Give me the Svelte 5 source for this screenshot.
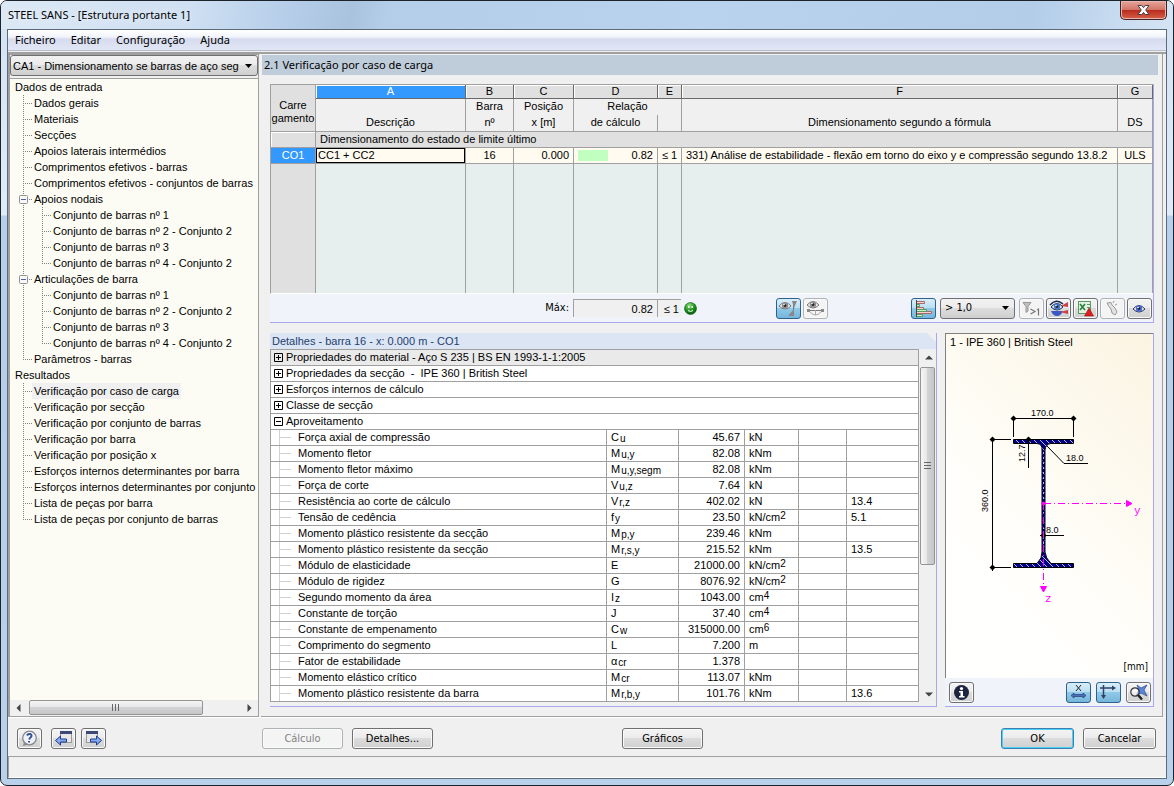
<script lang="ts">
	type TreeNode = { label: string; children?: string[] };
	type DetailRow = {
		name: string;
		symbol: string;
		sub?: string;
		value: string;
		unit?: string;
		power?: string;
		clause?: string;
	};

	const menu = ['Ficheiro', 'Editar', 'Configuração', 'Ajuda'];

	const memberSets = [
		'Conjunto de barras nº 1',
		'Conjunto de barras nº 2 - Conjunto 2',
		'Conjunto de barras nº 3',
		'Conjunto de barras nº 4 - Conjunto 2'
	];

	const sections: { title: string; nodes: TreeNode[] }[] = [
		{
			title: 'Dados de entrada',
			nodes: [
				{ label: 'Dados gerais' },
				{ label: 'Materiais' },
				{ label: 'Secções' },
				{ label: 'Apoios laterais intermédios' },
				{ label: 'Comprimentos efetivos - barras' },
				{ label: 'Comprimentos efetivos - conjuntos de barras' },
				{ label: 'Apoios nodais', children: memberSets },
				{ label: 'Articulações de barra', children: memberSets },
				{ label: 'Parâmetros - barras' }
			]
		},
		{
			title: 'Resultados',
			nodes: [
				{ label: 'Verificação por caso de carga' },
				{ label: 'Verificação por secção' },
				{ label: 'Verificação por conjunto de barras' },
				{ label: 'Verificação por barra' },
				{ label: 'Verificação por posição x' },
				{ label: 'Esforços internos determinantes por barra' },
				{ label: 'Esforços internos determinantes por conjunto' },
				{ label: 'Lista de peças por barra' },
				{ label: 'Lista de peças por conjunto de barras' }
			]
		}
	];

	const groups = [
		'Propriedades do material - Aço S 235 | BS EN 1993-1-1:2005',
		'Propriedades da secção  -  IPE 360 | British Steel',
		'Esforços internos de cálculo',
		'Classe de secção'
	];

	const details: DetailRow[] = [
		{ name: 'Força axial de compressão', symbol: 'C', sub: 'u', value: '45.67', unit: 'kN' },
		{ name: 'Momento fletor', symbol: 'M', sub: 'u,y', value: '82.08', unit: 'kNm' },
		{ name: 'Momento fletor máximo', symbol: 'M', sub: 'u,y,segm', value: '82.08', unit: 'kNm' },
		{ name: 'Força de corte', symbol: 'V', sub: 'u,z', value: '7.64', unit: 'kN' },
		{ name: 'Resistência ao corte de cálculo', symbol: 'V', sub: 'r,z', value: '402.02', unit: 'kN', clause: '13.4' },
		{ name: 'Tensão de cedência', symbol: 'f', sub: 'y', value: '23.50', unit: 'kN/cm', power: '2', clause: '5.1' },
		{ name: 'Momento plástico resistente da secção', symbol: 'M', sub: 'p,y', value: '239.46', unit: 'kNm' },
		{ name: 'Momento plástico resistente da secção', symbol: 'M', sub: 'r,s,y', value: '215.52', unit: 'kNm', clause: '13.5' },
		{ name: 'Módulo de elasticidade', symbol: 'E', value: '21000.00', unit: 'kN/cm', power: '2' },
		{ name: 'Módulo de rigidez', symbol: 'G', value: '8076.92', unit: 'kN/cm', power: '2' },
		{ name: 'Segundo momento da área', symbol: 'I', sub: 'z', value: '1043.00', unit: 'cm', power: '4' },
		{ name: 'Constante de torção', symbol: 'J', value: '37.40', unit: 'cm', power: '4' },
		{ name: 'Constante de empenamento', symbol: 'C', sub: 'w', value: '315000.00', unit: 'cm', power: '6' },
		{ name: 'Comprimento do segmento', symbol: 'L', value: '7.200', unit: 'm' },
		{ name: 'Fator de estabilidade', symbol: 'α', sub: 'cr', value: '1.378' },
		{ name: 'Momento elástico crítico', symbol: 'M', sub: 'cr', value: '113.07', unit: 'kNm' },
		{ name: 'Momento plástico resistente da barra', symbol: 'M', sub: 'r,b,y', value: '101.76', unit: 'kNm', clause: '13.6' }
	];

	const ratio = 0.82;

	let selected = $state('Verificação por caso de carga');
	let closed: Record<string, boolean> = $state({});
</script>

{#snippet eye(x: number, y: number, iris: string, rim: string)}
	<g transform="translate({x} {y})">
		<path d="M0 5Q6 -2 12 5Q6 11 0 5Z" fill="#f4f4f4" stroke={rim} stroke-width="1" />
		<circle cx="6" cy="4.6" r="3.2" fill={iris} />
		<circle cx="6" cy="4.6" r="1.3" fill="#222" />
		<circle cx="5" cy="3.5" r=".8" fill="#fff" />
	</g>
{/snippet}

<div class="window">
	<header class="titlebar">
		<h1>STEEL SANS - [Estrutura portante 1]</h1>
		<button class="close" aria-label="Fechar">
			<svg width="13" height="10" viewBox="0 0 13 10">
				<path
					d="M1 .5H4.8L6.5 2.6L8.2 .5H12L8.7 5L12 9.5H8.2L6.5 7.4L4.8 9.5H1L4.3 5Z"
					fill="#fff"
					stroke="#4c3b46"
				/>
			</svg>
		</button>
	</header>

	<div class="client">
		<nav class="menu">
			{#each menu as item}
				<button>{item}</button>
			{/each}
		</nav>

		<div class="main">
			<aside class="sidebar">
				<div class="case-row">
					<select class="case" aria-label="Caso">
						<option>CA1 - Dimensionamento se barras de aço segundo</option>
					</select>
				</div>
				<div class="tree">
					{#each sections as section}
						<div class="root">{section.title}</div>
						<ul>
							{#each section.nodes as node}
								<li>
									<div class="node">
										{#if node.children}
											<button
												class="toggle"
												aria-label={node.label}
												onclick={() => (closed[node.label] = !closed[node.label])}
											>
												<svg width="9" height="9" viewBox="0 0 9 9">
													<rect x=".5" y=".5" width="8" height="8" rx="1" fill="#f8f8f8" stroke="#919191" />
													<path d={closed[node.label] ? 'M2 4.5H7M4.5 2V7' : 'M2 4.5H7'} stroke="#4b63a7" />
												</svg>
											</button>
										{/if}
										<a
											href="#node"
											class:selected={selected === node.label}
											onclick={() => (selected = node.label)}>{node.label}</a
										>
									</div>
									{#if node.children && !closed[node.label]}
										<ul>
											{#each node.children as child}
												<li><div class="node"><a href="#node">{child}</a></div></li>
											{/each}
										</ul>
									{/if}
								</li>
							{/each}
						</ul>
					{/each}
				</div>
				<div class="hscroll">
					<button aria-label="Esquerda"><svg width="5" height="8" viewBox="0 0 5 8"><path d="M4.5 0V8L.5 4Z" fill="#444" /></svg></button>
					<div class="track">
						<div class="thumb">
							<svg width="9" height="7" viewBox="0 0 9 7"><path d="M1.5 0V7M4.5 0V7M7.5 0V7" stroke="#666" /></svg>
						</div>
					</div>
					<button aria-label="Direita"><svg width="5" height="8" viewBox="0 0 5 8"><path d="M.5 0V8L4.5 4Z" fill="#444" /></svg></button>
				</div>
			</aside>

			<main class="content">
				<h2>2.1 Verificação por caso de carga</h2>

				<section class="results">
					<table class="grid">
						<colgroup>
							<col class="w45" /><col class="w150" /><col class="w48" /><col class="w60" />
							<col class="w84" /><col class="w24" /><col /><col class="w35" />
						</colgroup>
						<thead>
							<tr class="letters">
								<th rowspan="3" class="corner">Carre<br />gamento</th>
								<th class="active">A</th>
								<th>B</th>
								<th>C</th>
								<th>D</th>
								<th>E</th>
								<th>F</th>
								<th>G</th>
							</tr>
							<tr class="upper">
								<th></th>
								<th>Barra</th>
								<th>Posição</th>
								<th colspan="2">Relação</th>
								<th></th>
								<th></th>
							</tr>
							<tr class="lower">
								<th>Descrição</th>
								<th>nº</th>
								<th>x [m]</th>
								<th>de cálculo</th>
								<th></th>
								<th>Dimensionamento segundo a fórmula</th>
								<th>DS</th>
							</tr>
						</thead>
						<tbody>
							<tr class="group">
								<th></th>
								<td colspan="7">Dimensionamento do estado de limite último</td>
							</tr>
							<tr class="case-line">
								<th>CO1</th>
								<td class="focus">CC1 + CC2</td>
								<td class="center">16</td>
								<td class="right">0.000</td>
								<td>
									<div class="ratio">
										<span class="bar" style="width: {Math.round(ratio * 37)}px"></span>
										<span>{ratio}</span>
									</div>
								</td>
								<td class="center">≤ 1</td>
								<td>331) Análise de estabilidade - flexão em torno do eixo y e compressão segundo 13.8.2</td>
								<td class="center">ULS</td>
							</tr>
							<tr class="filler">
								<th></th><td></td><td></td><td></td><td></td><td></td><td></td><td></td>
							</tr>
						</tbody>
					</table>

					<div class="summary">
						<span class="max-label">Máx:</span>
						<output class="max-value">0.82</output>
						<output class="max-limit">≤ 1</output>
						<svg class="smiley" width="13" height="13" viewBox="0 0 13 13">
							<defs>
								<radialGradient id="green" cx=".4" cy=".25" r=".8">
									<stop offset="0" stop-color="#8fe080" />
									<stop offset=".5" stop-color="#229a22" />
									<stop offset="1" stop-color="#064f08" />
								</radialGradient>
							</defs>
							<circle cx="6.5" cy="6.500" r="6" fill="url(#green)" stroke="#0a5a0c" stroke-width=".6" />
							<path d="M4 4H5.500V6H4ZM7.500 4H9V6H7.500Z" fill="#fff" />
							<path d="M4 8.500Q6.500 10.500 9 8.500" fill="none" stroke="#fff" />
						</svg>

						<div class="tools view-tools">
							<button class="tool pressed" aria-label="Mostrar coluna">
								<svg width="21" height="17" viewBox="0 0 21 17">
									{@render eye(1, 1, '#8e8e8e', '#777')}
									<path d="M15.5 1V16" stroke="#777" />
									<path d="M14 1H19L16 8Z M16 9L10 16H16Z" fill="#888" />
								</svg>
							</button>
							<button class="tool flat" aria-label="Mostrar barra">
								<svg width="21" height="17" viewBox="0 0 21 17">
									{@render eye(2, 0, '#8e8e8e', '#777')}
									<path d="M3 10.5H18" stroke="#777" />
									<path d="M2 9H5V12H2ZM16 9H19V12H16Z" fill="#888" />
									<path d="M5 12Q10.500 18 16 12M10.5 10V15" fill="none" stroke="#aaa" />
								</svg>
							</button>
						</div>

						<div class="tools filter-tools">
							<button class="tool pressed" aria-label="Diagrama">
								<svg width="21" height="17" viewBox="0 0 21 17">
									<g stroke-width="1">
										<path d="M3.500 1.500H11.500V3.500H3.500ZM3.500 7.500H10.500V9.500H3.500ZM3.500 11.500H18.500V13.500H3.500Z" fill="#ffd0d0" stroke="#a86a6a" />
										<path d="M3.500 4.500H6.500V6.500H3.500ZM3.500 9.500H13.500V11.500H3.500ZM3.500 14.500H9.500V16.500H3.500Z" fill="#c4f5c8" stroke="#5a9a62" />
									</g>
									<path d="M3.500 0V17" stroke="#444" />
								</svg>
							</button>
							<select class="limit" aria-label="Limite">
								<option>&gt; 1,0</option>
							</select>
							<button class="tool flat" aria-label="Filtrar">
								<svg width="21" height="17" viewBox="0 0 21 17">
									<path d="M2 2.500H10L7 6.500V11L5 12.500V6.500Z" fill="#c0c0c0" stroke="#999" />
									<path d="M9.500 9L14 11.500L9.500 14M16 10L17.500 9V15.500" fill="none" stroke="#777" stroke-width="1.2" />
								</svg>
							</button>
							<button class="tool" aria-label="Cores">
								<svg width="21" height="17" viewBox="0 0 21 17">
									<path d="M3 11H15Q13 16 9 16Q5 16 3 11Z" fill="#3c58c4" />
									<path d="M20 2L13 6L20 7ZM20 10L12 12L20 14Z" fill="#d04040" />
									{@render eye(3, 2, '#3f78d0', '#14254f')}
									<path d="M2 5Q8 -2 15 4" fill="none" stroke="#14254f" stroke-width="1.5" />
								</svg>
							</button>
							<button class="tool" aria-label="Exportar para Excel">
								<svg width="21" height="17" viewBox="0 0 21 17">
									<rect x="3.500" y="1.500" width="12" height="12" fill="#e3f1e3" stroke="#5a9a62" />
									<path d="M5 4L10 10M10 4L5 10" stroke="#27803a" stroke-width="1.600" />
									<path d="M12 4.500H15M12 7.500H15" stroke="#5a9a62" />
									<path d="M14 8L18.500 16H9.500Z" fill="#dc2020" stroke="#991010" stroke-width=".6" />
								</svg>
							</button>
							<button class="tool flat" aria-label="Selecionar">
								<svg width="21" height="17" viewBox="0 0 21 17">
									<path d="M5 3L9 2.500L10 5L13 8L15 12L13 15L10 13L9 9L7 6.500Z" fill="#e2e2e2" stroke="#999" />
									<path d="M11 3L12 1M13 5L15 4" stroke="#999" />
								</svg>
							</button>
							<button class="tool" aria-label="Modo de visualização">
								<svg width="21" height="17" viewBox="0 0 21 17">
									{@render eye(4, 4, '#4a6bd0', '#26345f')}
								</svg>
							</button>
						</div>
					</div>
				</section>

				<div class="split">
					<section class="details">
						<h3>Detalhes - barra 16 - x: 0.000 m - CO1</h3>
						<div class="details-body">
							<table>
								<colgroup>
									<col /><col class="w72" /><col class="w66" /><col class="w54" />
									<col class="w48" /><col class="w72" />
								</colgroup>
								<tbody>
									{#each groups as group}
										<tr class="heading">
											<td colspan="6">
												<button class="box" aria-label="Expandir">
													<svg width="9" height="9" viewBox="0 0 9 9"><path d="M.5 .5H8.5V8.500H.5ZM2 4.5H7M4.5 2V7" fill="none" stroke="#000" /></svg>
												</button>{group}
											</td>
										</tr>
									{/each}
									<tr class="heading">
										<td colspan="6">
											<button class="box" aria-label="Recolher">
												<svg width="9" height="9" viewBox="0 0 9 9"><path d="M.5 .5H8.5V8.500H.5ZM2 4.5H7" fill="none" stroke="#000" /></svg>
											</button>Aproveitamento
										</td>
									</tr>
									{#each details as row}
										<tr>
											<td class="name">{row.name}</td>
											<td>{row.symbol}{#if row.sub}<sub>{row.sub}</sub>{/if}</td>
											<td class="right">{row.value}</td>
											<td>{row.unit ?? ''}{#if row.power}<sup>{row.power}</sup>{/if}</td>
											<td></td>
											<td>{row.clause ?? ''}</td>
										</tr>
									{/each}
								</tbody>
							</table>
							<div class="vscroll">
								<button aria-label="Acima"><svg width="8" height="5" viewBox="0 0 8 5"><path d="M0 4.500H8L4 .5Z" fill="#444" /></svg></button>
								<div class="vtrack">
									<div class="vthumb">
										<svg width="7" height="9" viewBox="0 0 7 9"><path d="M0 1.5H7M0 4.5H7M0 7.500H7" stroke="#666" /></svg>
									</div>
								</div>
								<button aria-label="Abaixo"><svg width="8" height="5" viewBox="0 0 8 5"><path d="M0 .5H8L4 4.500Z" fill="#444" /></svg></button>
							</div>
						</div>
					</section>

					<section class="profile">
						<div class="drawing">
							<h3>1 - IPE 360 | British Steel</h3>
							<svg viewBox="0 0 207 306">
								<defs>
									<pattern id="hatch" width="6" height="6" patternUnits="userSpaceOnUse">
										<rect width="6" height="6" fill="#000080" />
										<path d="M0 0L6 6" stroke="#b8b8ff" />
									</pattern>
								</defs>
								<!-- cross-section -->
								<path
									d="M67.500 87.500H127.500V91.500H105Q99.500 92 99 98V200Q99.500 206 105 211.500H127.500V215.500H67.500V211.500H91Q96.500 206 96 200V98Q96.500 92 91 91.500H67.500Z"
									fill="url(#hatch)"
									stroke="#000"
								/>
								<path d="M97.500 98V202" stroke="#000060" stroke-width="2" />
								<path d="M97.500 100V200" stroke="#b8b8ff" stroke-dasharray="2 3" />
								<!-- dimension lines -->
								<g fill="none" stroke="#000">
									<path d="M65 66.500H130M67.500 64V85M127.500 64V85" />
									<path d="M46.500 85V219M44 87.500H65M44 215.500H65" />
									<path d="M82.500 85V116" />
									<path d="M101 94L118 111.500H142" />
									<path d="M94 183.500H118" />
								</g>
								<g>
									<path d="M67.500 63.500L70.500 66.500L67.500 69.500L64.500 66.500Z" />
									<path d="M127.500 63.500L130.500 66.500L127.500 69.500L124.500 66.500Z" />
									<path d="M46.500 84.500L49.500 87.500L46.500 90.500L43.500 87.500Z" />
									<path d="M46.500 212.500L49.500 215.500L46.500 218.500L43.500 215.500Z" />
									<path d="M82.500 84.500L85.500 87.500L82.500 90.500L79.500 87.500Z" />
									<path d="M97.500 180.500L100.500 183.500L97.500 186.500L94.500 183.500Z" />
								</g>
								<!-- local axes -->
								<g stroke="#f0f" fill="#f0f">
									<path d="M98 151.500H180" fill="none" stroke-dasharray="7 3 1 3" />
									<path d="M97.500 151V234" fill="none" stroke-dasharray="7 3 1 3" />
									<path d="M180.500 148.500V154.500L186 151.500Z" />
									<path d="M94.500 234.500H100.500L97.500 240Z" />
									<circle cx="97.500" cy="151.500" r="1.500" />
								</g>
								<g class="dims">
									<text x="85" y="64">170.0</text>
									<text x="120" y="109">18.0</text>
									<text x="100" y="181">8.0</text>
									<text transform="translate(42 160) rotate(-90)">360.0</text>
									<text transform="translate(79 110) rotate(-90)">12.7</text>
								</g>
								<g class="axes">
									<text x="188" y="162">y</text>
									<text x="99" y="250">z</text>
								</g>
							</svg>
							<div class="unit">[mm]</div>
						</div>
						<div class="profile-tools">
							<button class="tool" aria-label="Informação">
								<svg width="21" height="17" viewBox="0 0 21 17">
									<circle cx="10.500" cy="8.500" r="7.500" fill="#1c2440" />
									<circle cx="10.500" cy="4.600" r="1.600" fill="#fff" />
									<path d="M8 7H12V12H13.500V13.500H8V12H9.500V8.500H8Z" fill="#fff" />
								</svg>
							</button>
							<div class="tools">
								<button class="tool pressed" aria-label="Dimensões">
									<svg width="21" height="17" viewBox="0 0 21 17">
										<path d="M8 1L13 7M13 1L8 7" stroke="#222" />
										<path d="M3 11.500L6 9V10.500H15V9L18 11.500L15 14V12.500H6V14Z" fill="#4a70b8" stroke="#263e78" stroke-width=".7" />
									</svg>
								</button>
								<button class="tool pressed" aria-label="Eixos principais">
									<svg width="21" height="17" viewBox="0 0 21 17">
										<path d="M2 4H16M5.500 1V13" stroke="#33406a" stroke-width="1.500" />
										<path d="M14 1.500L18 4L14 6.500ZM3 11H8L5.500 15Z" fill="#33406a" />
									</svg>
								</button>
								<button class="tool" aria-label="Mostrar tudo">
									<svg width="21" height="17" viewBox="0 0 21 17">
										<path d="M9 1L13 4L19 1L16 6L19 12L13 9L8 12L11 6Z" fill="#5a86dc" stroke="#27468e" stroke-width=".7" />
										<circle cx="7" cy="8" r="4.200" fill="#fff" fill-opacity=".5" stroke="#333" stroke-width="1.200" />
										<path d="M10 11L14 15.500" stroke="#222" stroke-width="2.500" />
									</svg>
								</button>
							</div>
						</div>
					</section>
				</div>
			</main>
		</div>

		<footer class="actions">
			<div class="nav-tools">
				<button class="tool" aria-label="Ajuda">
					<svg width="21" height="17" viewBox="0 0 21 17">
						<circle cx="10.500" cy="8" r="6.800" fill="#eef2f8" stroke="#888" stroke-width="1.300" />
						<path d="M5 12L4 16L9 14.500Z" fill="#888" />
						<path d="M8 5.500Q9 3.500 11 4Q13.500 5 12 7Q10.500 8 10.300 9.500M10 11V12.500" fill="none" stroke="#34519c" stroke-width="2" />
					</svg>
				</button>
				<button class="tool step" aria-label="Tabela anterior">
					<svg width="21" height="17" viewBox="0 0 21 17">
						<rect x="7.500" y="1.500" width="11" height="11" fill="#e8e8e8" stroke="#999" />
						<path d="M7 1H19V4H7Z" fill="#3c4876" />
						<path d="M2.500 10.500L7.500 6V9H13.500V12H7.500V15Z" fill="#86a8ec" stroke="#1d3c92" />
					</svg>
				</button>
				<button class="tool" aria-label="Tabela seguinte">
					<svg width="21" height="17" viewBox="0 0 21 17">
						<rect x="3.500" y="1.500" width="11" height="11" fill="#e8e8e8" stroke="#999" />
						<path d="M3 1H15V4H3Z" fill="#3c4876" />
						<path d="M18.500 10.500L13.500 6V9H7.500V12H13.500V15Z" fill="#86a8ec" stroke="#1d3c92" />
					</svg>
				</button>
			</div>
			<div class="buttons">
				<button class="push wide" disabled>Cálculo</button>
				<button class="push wide">Detalhes...</button>
			</div>
			<button class="push wide graphics">Gráficos</button>
			<div class="buttons dialog">
				<button class="push default">OK</button>
				<button class="push">Cancelar</button>
			</div>
		</footer>
		<div class="status"></div>
	</div>
</div>

<style>
	:global(body) {
		background: #fff;
	}

	.window {
		--ui: 'Noto Sans', 'Segoe UI', sans-serif;
		--tahoma: 'DejaVu Sans Condensed', Tahoma, sans-serif;
		--grid: 'Liberation Sans', 'Microsoft Sans Serif', Arial, sans-serif;
		box-sizing: border-box;
		display: flex;
		flex-direction: column;
		min-height: 100vh;
		padding: 0 6px 6px;
		border: 1px solid #1d232b;
		border-radius: 7px;
		background: linear-gradient(#d3e2f3 0, #dfebf8 214px, #b6cfea 215px, #b9d1ea 100%);
		color: #000;
		font-family: var(--grid);
		font-size: 11px;
		line-height: 16px;
	}

	.window * {
		box-sizing: border-box;
	}

	button,
	select {
		margin: 0;
		padding: 0;
		color: inherit;
		font: inherit;
	}

	svg {
		display: block;
		flex-shrink: 0;
	}

	/* Title bar */
	.titlebar {
		display: flex;
		justify-content: space-between;
		align-items: flex-start;
		height: 28px;
		margin: 0 -6px;
		padding: 0 6px;
		border-radius: 6px 6px 0 0;
		background: linear-gradient(
			100deg,
			#dce8f5 0,
			#cfe0f2 16%,
			#b7cfea 24%,
			#a9c2de 30%,
			#b4cde9 33%,
			#b9d3ee 60%,
			#b3cde9 88%,
			#d6e5f5 100%
		);
	}

	h1 {
		margin: 0;
		padding: 6px 1px;
		font-family: var(--ui);
		font-size: 11px;
		font-weight: 400;
		line-height: 16px;
		text-shadow: 0 0 8px #fff;
	}

	.close {
		display: flex;
		align-items: center;
		justify-content: center;
		width: 47px;
		height: 19px;
		border: 1px solid #43202a;
		border-top: 0;
		border-radius: 0 0 5px 5px;
		background: linear-gradient(#e5a79b, #d17667 48%, #b8281a 50%, #d5624a);
		box-shadow: inset 0 0 0 1px #e9b5ab;
	}

	.client {
		display: flex;
		flex: 1;
		flex-direction: column;
		border: 1px solid #5c6b7c;
		background: #f0f0f0;
	}

	.menu {
		display: flex;
		gap: 15px;
		height: 21px;
		padding: 0 7px;
		border-bottom: 1px solid #b6bccc;
		background: linear-gradient(#fff, #f1f4fb 35%, #d6dcee 45%, #e2e7f6);
	}

	.menu button {
		border: 0;
		background: none;
		font-family: var(--ui);
		font-size: 11px;
		line-height: 20px;
	}

	/* Panels */
	.main {
		display: flex;
		flex: 1;
		gap: 2px;
		margin-top: 1px;
		padding-right: 3px;
		border-top: 2px solid #a0a0a0;
	}

	.sidebar {
		display: flex;
		flex: none;
		flex-direction: column;
		width: 251px;
		border: 1px solid #a0a0a0;
		border-left-width: 2px;
		background: #fcfcf4;
	}

	.case-row {
		padding: 0 0 2px;
		border-bottom: 1px solid #a0a0a0;
		background: #f0f0f0;
	}

	select {
		appearance: none;
		border: 1px solid #707070;
		border-radius: 3px;
		background-image: url("data:image/svg+xml,%3Csvg xmlns='http://www.w3.org/2000/svg' width='7' height='4'%3E%3Cpath d='M0 0H7L3.5 4Z'/%3E%3C/svg%3E"),
			linear-gradient(#f2f2f2, #ebebeb 49%, #ddd 50%, #cfcfcf);
		background-position:
			right 5px center,
			0 0;
		background-repeat: no-repeat;
		background-size:
			7px 4px,
			100% 100%;
	}

	.case {
		display: block;
		width: 100%;
		height: 21px;
		padding: 0 18px 0 2px;
		overflow: hidden;
		white-space: nowrap;
	}

	.tree {
		flex: 1;
		overflow: hidden;
		white-space: nowrap;
	}

	.root {
		padding-left: 5px;
	}

	.tree ul {
		margin: 0;
		padding: 0 0 0 9px;
		list-style: none;
	}

	.tree li ul {
		padding-left: 19px;
	}

	.tree li {
		background: repeating-linear-gradient(#808080 0 1px, transparent 1px 2px) 4px 0 / 1px 100% no-repeat;
	}

	.tree li:last-child {
		background-size: 1px 8px;
	}

	.node {
		display: flex;
		align-items: center;
		height: 16px;
		padding-left: 13px;
		background: repeating-linear-gradient(90deg, #808080 0 1px, transparent 1px 2px) 4px 8px / 9px 1px no-repeat;
	}

	.node a {
		padding: 0 2px;
		color: inherit;
		text-decoration: none;
	}

	.node a.selected {
		background: #f0f0f0;
	}

	.toggle {
		width: 9px;
		height: 9px;
		margin: 0 4px 0 -13px;
		border: 0;
		background: none;
	}

	.hscroll {
		display: flex;
		height: 16px;
		background: #f0f0f0;
	}

	.hscroll button,
	.vscroll button {
		display: flex;
		align-items: center;
		justify-content: center;
		width: 17px;
		height: 16px;
		border: 0;
		background: none;
	}

	.track {
		flex: 1;
		padding-left: 2px;
	}

	.thumb {
		display: flex;
		align-items: center;
		justify-content: center;
		width: 82%;
		height: 15px;
		border: 1px solid #959595;
		border-radius: 2px;
		background: linear-gradient(#f5f5f5, #e6e6e6 49%, #d3d3d5 50%, #c6c6c8);
	}

	.content {
		display: flex;
		flex: 1;
		flex-direction: column;
		min-width: 0;
		border-right: 1px solid #a0a0a0;
		border-bottom: 1px solid #a0a0a0;
		padding-top: 1px;
		background: #f0f0f0;
	}

	h2 {
		margin: 0 4px 9px 1px;
		padding-left: 2px;
		background: #bfccda;
		font-family: var(--ui);
		font-size: 11px;
		font-weight: 400;
		line-height: 20px;
	}

	.results {
		margin: 0 8px 10px 9px;
		border-right: 1px solid #a8a8ee;
		border-bottom: 1px solid #a8a8ee;
		background: #f0f3fa;
	}

	/* Result grid */
	table {
		width: 100%;
		border-spacing: 0;
		table-layout: fixed;
		font-size: 11px;
		line-height: 15px;
	}

	th,
	td {
		padding: 0;
		overflow: hidden;
		font-weight: 400;
		white-space: nowrap;
	}

	.w24 { width: 24px; }
	.w35 { width: 35px; }
	.w45 { width: 45px; }
	.w48 { width: 48px; }
	.w54 { width: 54px; }
	.w60 { width: 60px; }
	.w66 { width: 66px; }
	.w72 { width: 72px; }
	.w84 { width: 84px; }
	.w150 { width: 150px; }

	.grid {
		border-top: 1px solid #a0a0a0;
		border-left: 1px solid #a0a0a0;
		border-bottom: 1px solid #fff;
	}

	.grid th,
	.grid td {
		border-right: 1px solid #a0a0a0;
		border-bottom: 1px solid #a0a0a0;
	}

	.letters th {
		height: 14px;
		border-right-color: #696969;
		border-bottom-color: #696969;
		background: #e0e0e0;
		box-shadow: inset 1px 1px #fff;
		line-height: 13px;
	}

	.letters .active {
		background: #3399ff;
		color: #fff;
	}

	.letters .corner {
		padding-top: 8px;
		border-right-color: #a0a0a0;
		border-bottom-color: #a0a0a0;
		box-shadow: none;
	}

	.upper th {
		height: 16px;
		border-bottom: 0;
		background: #f0f0f0;
		vertical-align: top;
	}

	.lower th {
		height: 17px;
		background: #f0f0f0;
		vertical-align: top;
	}

	.group th,
	.group td {
		height: 16px;
		background: #e0e0e0;
	}

	.group th {
		box-shadow: inset 1px 1px #fff;
	}

	.case-line th {
		height: 16px;
		background: #3399ff;
		color: #fff;
	}

	.grid td {
		padding: 0 4px;
	}

	.case-line td {
		background: #fffbf0;
	}

	.case-line td.focus {
		padding: 0 2px;
		box-shadow: inset 0 0 0 1px #000;
	}

	.grid td.center {
		padding: 0;
		text-align: center;
	}

	.right {
		text-align: right;
	}

	.ratio {
		display: flex;
		align-items: center;
		justify-content: space-between;
	}

	.bar {
		height: 11px;
		background: #c0ffc0;
	}

	.filler th,
	.filler td {
		height: 129px;
		border-bottom: 0;
		background: #e6eeee;
	}

	.filler th {
		background: #e0e0e0;
	}

	.summary {
		display: flex;
		align-items: center;
		height: 28px;
		padding-right: 1px;
	}

	.max-label {
		width: 303px;
		padding-right: 4px;
		font-family: var(--tahoma);
		text-align: right;
	}

	.max-value,
	.max-limit {
		height: 18px;
		border-top: 1px solid #a0a0a0;
		border-left: 1px solid #a0a0a0;
		background: #f0f0f0;
		line-height: 18px;
		text-align: right;
	}

	.max-value {
		width: 84px;
		padding-right: 4px;
	}

	.max-limit {
		width: 24px;
		padding-right: 2px;
	}

	.smiley {
		margin-left: 3px;
	}

	.tools {
		display: flex;
		gap: 2px;
	}

	.view-tools {
		margin-left: 79px;
	}

	.filter-tools {
		margin-left: auto;
	}

	.tool {
		display: flex;
		align-items: center;
		justify-content: center;
		flex: none;
		width: 25px;
		height: 21px;
		border: 1px solid #707070;
		border-radius: 3px;
		background: linear-gradient(#f4f4f4, #ebebeb 49%, #dcdcdc 50%, #d0d0d0);
		box-shadow: inset 0 0 0 1px #fafafa;
	}

	.tool.pressed {
		border-color: #2c628b;
		background: linear-gradient(#d8eefa, #b9def2 48%, #90c9e8 50%, #76b6db);
		box-shadow: none;
	}

	.tool.flat {
		border-color: #adb2b5;
		background: #f4f4f4;
	}

	.limit {
		width: 75px;
		height: 21px;
		margin: 0 2px;
		padding-left: 4px;
		font-family: var(--tahoma);
	}

	/* Details */
	.split {
		display: flex;
		flex: 1;
		gap: 8px;
		margin: 0 8px 9px 9px;
	}

	h3 {
		margin: 0;
		font-size: 11px;
		font-weight: 400;
		line-height: 16px;
	}

	.details {
		flex: 1;
		min-width: 0;
		border-right: 1px solid #a8a8ee;
		border-bottom: 1px solid #a8a8ee;
	}

	.details h3 {
		padding-left: 2px;
		background: #dce5f4;
		clip-path: polygon(0 0, calc(100% - 9px) 0, 100% 9px, 100% 100%, 0 100%);
		color: #1d4170;
	}

	.details-body {
		display: flex;
		align-items: flex-start;
		gap: 1px;
	}

	.details table {
		flex: 1;
		min-width: 0;
		width: auto;
		border-collapse: collapse;
		background: #fff;
	}

	.details td {
		height: 16px;
		padding: 0 4px;
		border: 1px solid #a0a0a0;
	}

	.details tr:first-child td {
		background: #eaeaea;
	}

	.details .heading td {
		padding: 0 3px;
		white-space: pre-wrap;
	}

	.details .name {
		padding-left: 27px;
		background:
			linear-gradient(#d0d0d0, #d0d0d0) 8px 0 / 1px 100% no-repeat,
			linear-gradient(#d0d0d0, #d0d0d0) 8px 7px / 12px 1px no-repeat;
	}

	.box {
		display: inline-block;
		width: 9px;
		height: 9px;
		margin-right: 3px;
		border: 0;
		background: none;
		vertical-align: -1px;
	}

	sub,
	sup {
		font-size: 10px;
		line-height: 0;
	}

	sub {
		padding-left: 1px;
		vertical-align: -1px;
	}

	sup {
		vertical-align: 2px;
	}

	.vscroll {
		display: flex;
		flex-direction: column;
		align-self: stretch;
		width: 16px;
		background: #f0f0f0;
	}

	.vtrack {
		flex: 1;
		padding: 2px 1px 0 0;
	}

	.vthumb {
		display: flex;
		align-items: center;
		justify-content: center;
		height: 62%;
		border: 1px solid #959595;
		border-radius: 2px;
		background: linear-gradient(90deg, #f5f5f5, #e6e6e6 49%, #d3d3d5 50%, #c6c6c8);
	}

	/* Section profile */
	.profile {
		display: flex;
		flex: none;
		flex-direction: column;
		width: 209px;
		border-right: 1px solid #a8a8ee;
		border-bottom: 1px solid #a8a8ee;
	}

	.drawing {
		display: flex;
		flex: 1;
		flex-direction: column;
		border-top: 1px solid #808080;
		border-left: 1px solid #808080;
		background: linear-gradient(45deg, #fff, #fffefa 40%, #fbf4e2);
	}

	.drawing h3 {
		padding: 0 4px 1px;
	}

	.drawing svg {
		width: 100%;
		flex: 1;
	}

	.dims {
		font-size: 9px;
	}

	.axes {
		fill: #f0f;
		font-family: 'Liberation Mono', monospace;
		font-size: 11px;
	}

	.unit {
		padding: 0 5px 3px;
		font-family: var(--tahoma);
		font-size: 10px;
		text-align: right;
	}

	.profile-tools {
		display: flex;
		align-items: center;
		justify-content: space-between;
		height: 28px;
		padding: 0 2px 0 4px;
		background: #f0f3fa;
	}

	.profile-tools .tools {
		gap: 5px;
	}

	/* Footer */
	.actions {
		display: flex;
		align-items: center;
		height: 39px;
		padding: 3px 10px 0 9px;
		border-top: 1px solid #fff;
		font-family: var(--tahoma);
	}

	.nav-tools {
		display: flex;
		gap: 5px;
		width: 245px;
	}

	.step {
		margin-left: 4px;
	}

	.buttons {
		display: flex;
		gap: 9px;
	}

	.push {
		width: 73px;
		height: 21px;
		border: 1px solid #707070;
		border-radius: 3px;
		background: linear-gradient(#f4f4f4, #ebebeb 49%, #dcdcdc 50%, #d0d0d0);
		box-shadow: inset 0 0 0 1px #fafafa;
	}

	.wide {
		width: 81px;
	}

	.push:disabled {
		border-color: #adb2b5;
		background: #f4f4f4;
		color: #838383;
	}

	.push.default {
		border-color: #3c7fb1;
		box-shadow: inset 0 0 0 1px #48d1f5;
	}

	.graphics {
		margin-left: 189px;
	}

	.dialog {
		margin-left: auto;
	}

	.status {
		height: 22px;
		border-top: 1px solid #a0a0a0;
		border-left: 1px solid #a0a0a0;
		border-bottom: 1px solid #fff;
	}
</style>
